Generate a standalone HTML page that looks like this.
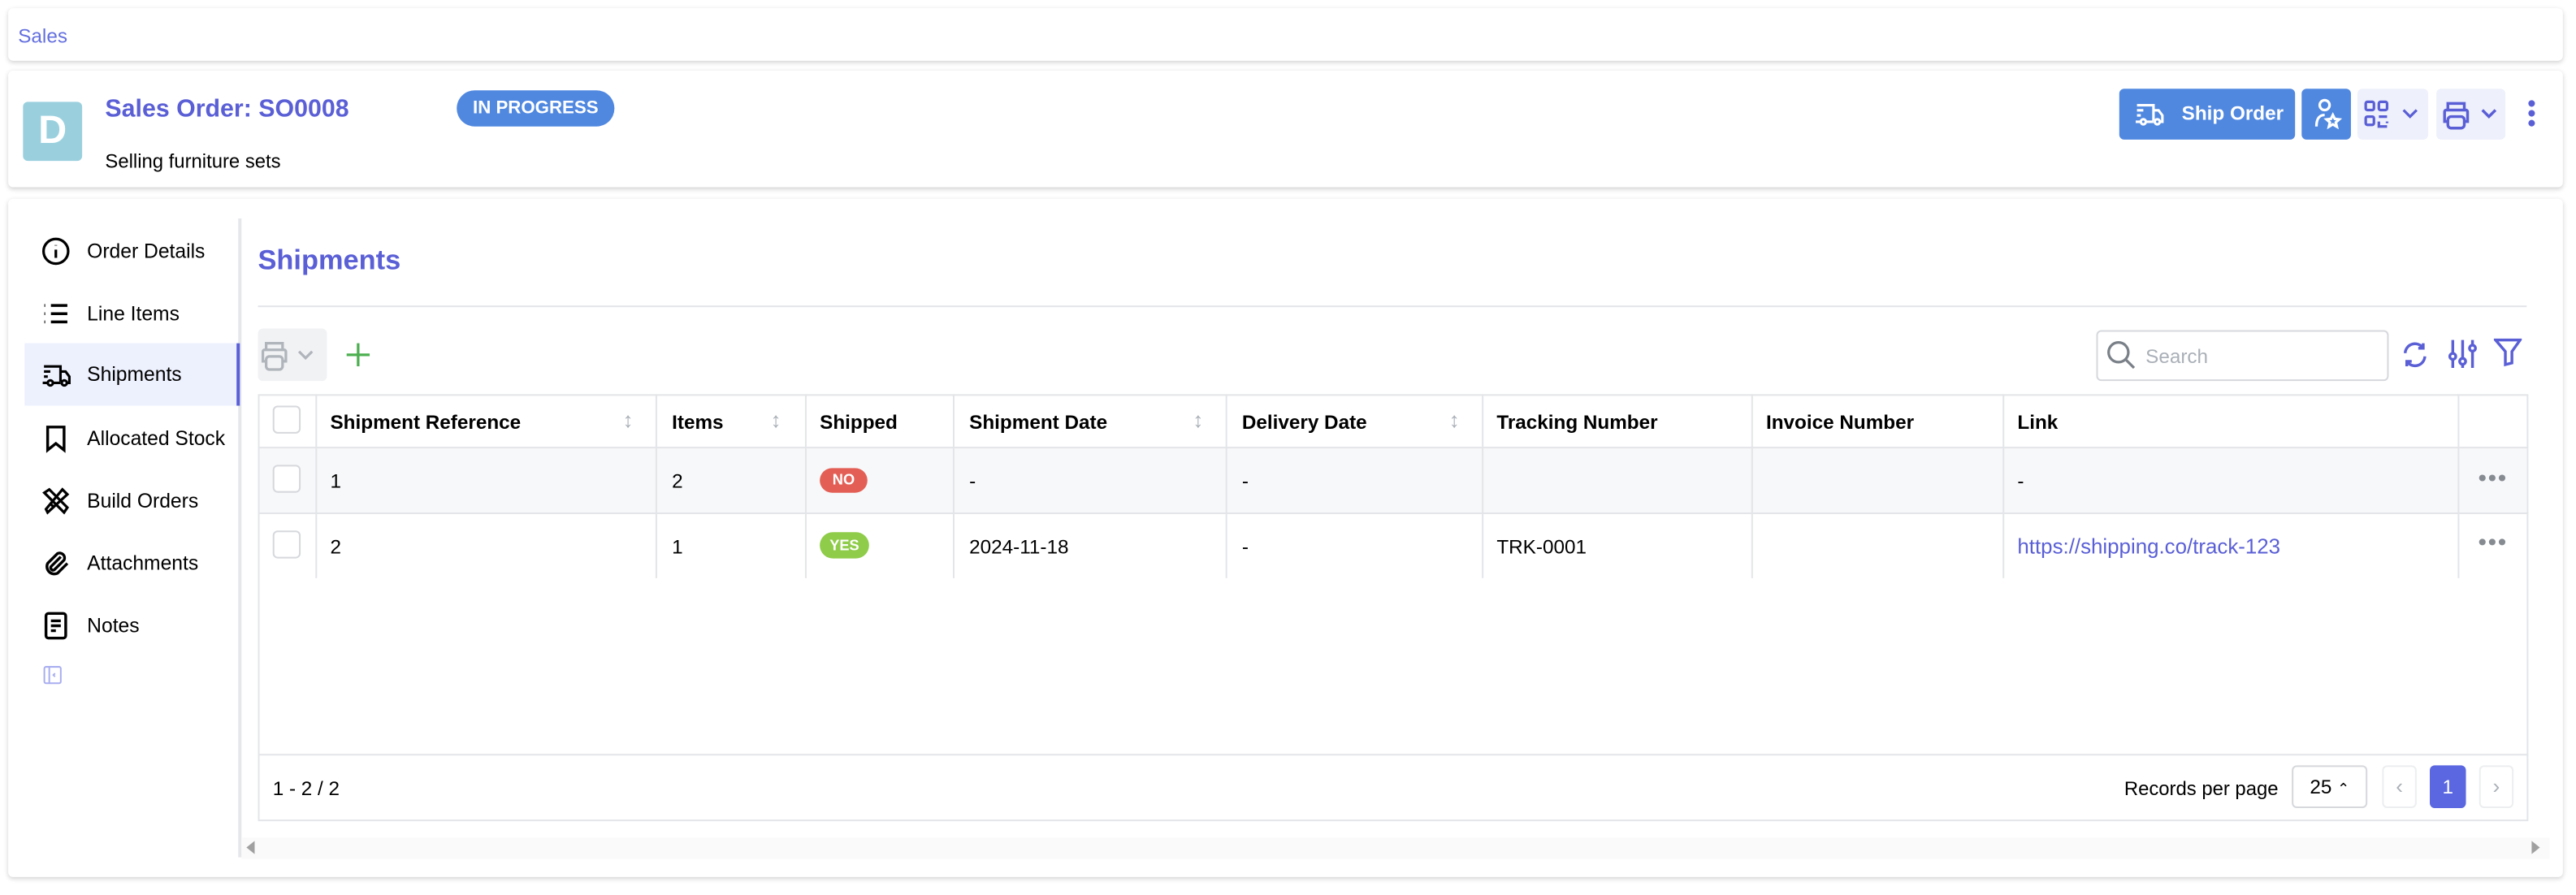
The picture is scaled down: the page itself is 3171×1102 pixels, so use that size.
<!DOCTYPE html>
<html><head><meta charset="utf-8"><style>
*{box-sizing:border-box;margin:0;padding:0}
html,body{width:3171px;height:1102px;overflow:hidden;background:#fff}
#w{position:absolute;left:0;top:0;width:1568px;height:545px;transform:scale(2.02232);transform-origin:0 0;font-family:"Liberation Sans",sans-serif;color:#000;font-size:12px}
.a{position:absolute}
.card{position:absolute;background:#fff;border-radius:3px;box-shadow:0 1px 3px rgba(0,0,0,.18)}
.ind{color:#5a5fd6}
.nav{position:absolute;left:15px;width:131px;height:38px;display:flex;align-items:center;font-size:12.2px}
.nav svg{position:absolute;left:10px}
.nav span{position:absolute;left:38px}
.th{position:absolute;top:241px;height:32px;line-height:32px;font-weight:bold;font-size:12px}
.vl{position:absolute;width:1px;background:#e3e5e8}
.hl{position:absolute;height:1px;background:#e3e5e8}
.cb{position:absolute;width:17px;height:17px;border:1px solid #d6d8dc;border-radius:3px;background:#fff}
.c{position:absolute;font-size:12px}
.sort{position:absolute;color:#aab0b8;font-size:13px}
</style></head><body><div id="w">
<div class="card" style="left:5px;top:5px;width:1555px;height:32px"></div>
<div class="a ind" style="left:11px;top:15px;font-size:12px;color:#6470df">Sales</div>

<div class="card" style="left:5px;top:43px;width:1555px;height:71px"></div>
<div class="a" style="left:14px;top:62px;width:36px;height:36px;background:#9ad0de;border-radius:3px;color:#fff;font-weight:bold;font-size:24px;text-align:center;line-height:36px">D</div>
<div class="a ind" style="left:64px;top:58px;font-size:15px;font-weight:bold">Sales Order: SO0008</div>
<div class="a" style="left:64px;top:91px;font-size:11.8px">Selling furniture sets</div>
<div class="a" style="left:278px;top:55px;width:96px;height:22px;border-radius:11px;background:#5088e0;color:#fff;font-weight:bold;font-size:11px;text-align:center;line-height:22px">IN PROGRESS</div>

<div class="a" style="left:1290px;top:54px;width:107px;height:31px;border-radius:3px;background:#5088e0;color:#fff;font-weight:bold;font-size:12px;line-height:31px;padding-left:38px">Ship Order</div>
<svg class="a" style="left:1299px;top:61px" width="19" height="17" viewBox="0 0 24 22" fill="none" stroke="#fff" stroke-width="2"><path d="M2 4h13v12M15 8h4l3 4v5h-2M2 8h5M2 12h3M2 16v1h3M9 17h6"/><circle cx="7" cy="17" r="2"/><circle cx="18" cy="17" r="2"/></svg>
<div class="a" style="left:1401px;top:54px;width:30px;height:31px;border-radius:3px;background:#5088e0"></div>
<svg class="a" style="left:1406px;top:59px" width="20" height="21" viewBox="0 0 20 21" fill="none" stroke="#fff" stroke-width="1.6"><circle cx="9" cy="5" r="3"/><path d="M4 18c0-5 2-7 5-7"/><path d="M14 11l1.2 2.4 2.6.3-2 1.8.6 2.6-2.4-1.4-2.4 1.4.6-2.6-2-1.8 2.6-.3z"/></svg>
<div class="a" style="left:1435px;top:54px;width:43px;height:31px;border-radius:3px;background:#eef0fb"></div>
<svg class="a" style="left:1439px;top:61px" width="34" height="17" viewBox="0 0 34 17" fill="none" stroke="#5a5fd6" stroke-width="1.6"><rect x="1" y="1" width="5" height="5" rx="1"/><rect x="9" y="1" width="5" height="5" rx="1"/><rect x="1" y="10" width="5" height="5" rx="1"/><path d="M9 10h5M9 13v3h5M14 13v1"/><path d="M24 6l4 4 4-4"/></svg>
<div class="a" style="left:1483px;top:54px;width:42px;height:31px;border-radius:3px;background:#eef0fb"></div>
<svg class="a" style="left:1486px;top:61px" width="36" height="18" viewBox="0 0 36 18" fill="none" stroke="#5a5fd6" stroke-width="1.7"><path d="M4 6V2h10v4M4 13H2V7a1 1 0 011-1h12a1 1 0 011 1v6h-2"/><rect x="4" y="10" width="10" height="7" rx="2"/><path d="M25 6l4 4 4-4"/></svg>
<div class="a" style="left:1539px;top:61px;width:4px;height:4px;border-radius:50%;background:#5a5fd6;box-shadow:0 6px 0 #5a5fd6,0 12px 0 #5a5fd6"></div>

<div class="card" style="left:5px;top:121px;width:1555px;height:413px"></div>
<div class="a" style="left:145px;top:133px;width:2px;height:389px;background:#e5e7eb"></div>
<div class="nav" style="top:134px"><svg width="18" height="18" viewBox="0 0 18 18" fill="none" stroke="#000" stroke-width="1.6"><circle cx="9" cy="9" r="7.5"/><path d="M9 8v5M9 5.2v.3"/></svg><span>Order Details</span></div>
<div class="nav" style="top:172px"><svg width="18" height="18" viewBox="0 0 18 18" fill="none" stroke="#000" stroke-width="1.7"><path d="M6 4h10M6 9h10M6 14h10M2 4h.5M2 9h.5M2 14h.5"/></svg><span>Line Items</span></div>
<div class="nav" style="top:209px;background:#edf0fd;border-right:2px solid #5a5fd6"><svg width="19" height="17" viewBox="0 0 24 22" fill="none" stroke="#000" stroke-width="2"><path d="M2 4h13v12M15 8h4l3 4v5h-2M2 8h5M2 12h3M2 16v1h3M9 17h6"/><circle cx="7" cy="17" r="2"/><circle cx="18" cy="17" r="2"/></svg><span>Shipments</span></div>
<div class="nav" style="top:248px"><svg width="18" height="18" viewBox="0 0 18 18" fill="none" stroke="#000" stroke-width="1.7"><path d="M4 2h10v14l-5-4-5 4z"/></svg><span>Allocated Stock</span></div>
<div class="nav" style="top:286px"><svg width="18" height="18" viewBox="0 0 18 18" fill="none" stroke="#000" stroke-width="1.6"><path d="M3 14L13 2l3 3L4 16zM2 4l3-2 11 11-2 3zM6 11l2 2M10 7l1 1"/></svg><span>Build Orders</span></div>
<div class="nav" style="top:324px"><svg width="18" height="18" viewBox="0 0 18 18" fill="none" stroke="#000" stroke-width="1.7"><path d="M12 5l-6 6a1.5 1.5 0 002 2l6-6a3 3 0 00-4-4l-6 6a4.5 4.5 0 006 6l6-6"/></svg><span>Attachments</span></div>
<div class="nav" style="top:362px"><svg width="18" height="18" viewBox="0 0 18 18" fill="none" stroke="#000" stroke-width="1.7"><rect x="3" y="1.5" width="12" height="15" rx="1.5"/><path d="M6 6h6M6 9h6M6 12h3"/></svg><span>Notes</span></div>
<svg class="a" style="left:26px;top:405px" width="12" height="12" viewBox="0 0 12 12" fill="none" stroke="#a9aef0" stroke-width="1"><rect x="1" y="1" width="10" height="10" rx="1"/><path d="M4 1v10M7.5 5l-1 1 1 1"/></svg>

<div class="a ind" style="left:157px;top:149px;font-size:17px;font-weight:bold">Shipments</div>
<div class="hl" style="left:157px;top:186px;width:1381px"></div>

<div class="a" style="left:157px;top:200px;width:42px;height:32px;background:#f1f2f4;border-radius:3px"></div>
<svg class="a" style="left:158px;top:207px" width="38" height="19" viewBox="0 0 38 19" fill="none" stroke="#b0b5bc" stroke-width="1.6"><path d="M4 6V2h10v4M4 13H2V7a1 1 0 011-1h12a1 1 0 011 1v6h-2"/><rect x="4" y="10" width="10" height="8" rx="2"/><path d="M24 7l4 4 4-4"/></svg>
<svg class="a" style="left:210px;top:208px" width="16" height="16" viewBox="0 0 16 16" stroke="#4caf50" stroke-width="1.6"><path d="M8 1v14M1 8h14"/></svg>

<div class="a" style="left:1276px;top:201px;width:178px;height:31px;border:1px solid #d6d8dc;border-radius:3px"></div>
<svg class="a" style="left:1282px;top:207px" width="18" height="18" viewBox="0 0 18 18" fill="none" stroke="#7a8088" stroke-width="1.6"><circle cx="7.5" cy="7.5" r="6"/><path d="M12 12l5 5"/></svg>
<div class="a" style="left:1306px;top:210px;color:#aab0b8;font-size:12px">Search</div>
<svg class="a" style="left:1461px;top:207px" width="18" height="18" viewBox="0 0 18 18" fill="none" stroke="#5a5fd6" stroke-width="1.7"><path d="M3 8a6 6 0 0111-3M15 10a6 6 0 01-11 3M14 2v3h-3M4 16v-3h3"/></svg>
<svg class="a" style="left:1490px;top:206px" width="18" height="19" viewBox="0 0 18 19" fill="none" stroke="#5a5fd6" stroke-width="1.7"><path d="M3 1v17M9 1v17M15 1v17"/><circle cx="3" cy="11" r="1.8" fill="#fff"/><circle cx="9" cy="14" r="1.8" fill="#fff"/><circle cx="15" cy="6" r="1.8" fill="#fff"/></svg>
<svg class="a" style="left:1518px;top:206px" width="17" height="18" viewBox="0 0 17 18" fill="none" stroke="#5a5fd6" stroke-width="1.7"><path d="M1 1h15l-5 7v7l-4 1V8z"/></svg>

<div class="a" style="left:157px;top:240px;width:1382px;height:260px;border:1px solid #e3e5e8"></div>
<div class="a" style="left:158px;top:273px;width:1380px;height:39px;background:#f7f8fa"></div>
<div class="hl" style="left:157px;top:272px;width:1382px"></div>
<div class="hl" style="left:157px;top:312px;width:1382px"></div>
<div class="hl" style="left:157px;top:459px;width:1382px"></div>
<div class="vl" style="left:192px;top:240px;height:112px"></div>
<div class="vl" style="left:399px;top:240px;height:112px"></div>
<div class="vl" style="left:490px;top:240px;height:112px"></div>
<div class="vl" style="left:580px;top:240px;height:112px"></div>
<div class="vl" style="left:746px;top:240px;height:112px"></div>
<div class="vl" style="left:902px;top:240px;height:112px"></div>
<div class="vl" style="left:1066px;top:240px;height:112px"></div>
<div class="vl" style="left:1219px;top:240px;height:112px"></div>
<div class="vl" style="left:1496px;top:240px;height:112px"></div>
<div class="cb" style="left:166px;top:247px"></div>
<div class="cb" style="left:166px;top:283px"></div>
<div class="cb" style="left:166px;top:323px"></div>
<div class="th" style="left:201px">Shipment Reference</div><div class="sort" style="left:379px;top:248px">↕</div>
<div class="th" style="left:409px">Items</div><div class="sort" style="left:469px;top:248px">↕</div>
<div class="th" style="left:499px">Shipped</div>
<div class="th" style="left:590px">Shipment Date</div><div class="sort" style="left:726px;top:248px">↕</div>
<div class="th" style="left:756px">Delivery Date</div><div class="sort" style="left:882px;top:248px">↕</div>
<div class="th" style="left:911px">Tracking Number</div>
<div class="th" style="left:1075px">Invoice Number</div>
<div class="th" style="left:1228px">Link</div>
<div class="c" style="left:201px;top:286px">1</div>
<div class="c" style="left:409px;top:286px">2</div>
<div class="a" style="left:499px;top:285px;width:29px;height:15px;border-radius:8px;background:#e35f55;color:#fff;font-weight:bold;font-size:9px;text-align:center;line-height:15px">NO</div>
<div class="c" style="left:590px;top:286px">-</div>
<div class="c" style="left:756px;top:286px">-</div>
<div class="c" style="left:1228px;top:286px">-</div>
<div class="c" style="left:201px;top:326px">2</div>
<div class="c" style="left:409px;top:326px">1</div>
<div class="a" style="left:499px;top:324px;width:30px;height:16px;border-radius:8px;background:#8fcc4a;color:#fff;font-weight:bold;font-size:9px;text-align:center;line-height:16px">YES</div>
<div class="c" style="left:590px;top:326px">2024-11-18</div>
<div class="c" style="left:756px;top:326px">-</div>
<div class="c" style="left:911px;top:326px">TRK-0001</div>
<div class="c" style="left:1228px;top:325px;color:#5a5fd6;font-size:12.8px">https://shipping.co/track-123</div>
<div class="a" style="left:1509px;top:289px;width:4px;height:4px;border-radius:50%;background:#868b92;box-shadow:6px 0 0 #868b92,12px 0 0 #868b92"></div>
<div class="a" style="left:1509px;top:328px;width:4px;height:4px;border-radius:50%;background:#868b92;box-shadow:6px 0 0 #868b92,12px 0 0 #868b92"></div>

<div class="c" style="left:166px;top:473px">1 - 2 / 2</div>
<div class="c" style="left:1293px;top:473px;font-size:11.8px">Records per page</div>
<div class="a" style="left:1395px;top:466px;width:46px;height:26px;border:1px solid #d6d8dc;border-radius:3px;font-size:12px;line-height:24px;padding-left:10px">25 <span style="font-size:9px">⌃</span></div>
<div class="a" style="left:1450px;top:466px;width:21px;height:26px;border:1px solid #eceef0;border-radius:3px;color:#aab0b8;text-align:center;line-height:24px;font-size:13px">‹</div>
<div class="a" style="left:1479px;top:466px;width:22px;height:26px;background:#5a67e0;border-radius:3px;color:#fff;text-align:center;line-height:26px">1</div>
<div class="a" style="left:1509px;top:466px;width:21px;height:26px;border:1px solid #eceef0;border-radius:3px;color:#aab0b8;text-align:center;line-height:24px;font-size:13px">›</div>

<div class="a" style="left:147px;top:510px;width:1405px;height:13px;background:#fafafa"></div>
<div class="a" style="left:150px;top:512px;width:0;height:0;border-top:4px solid transparent;border-bottom:4px solid transparent;border-right:5px solid #a0a0a0"></div>
<div class="a" style="left:1541px;top:512px;width:0;height:0;border-top:4px solid transparent;border-bottom:4px solid transparent;border-left:5px solid #a0a0a0"></div>
</div></body></html>
